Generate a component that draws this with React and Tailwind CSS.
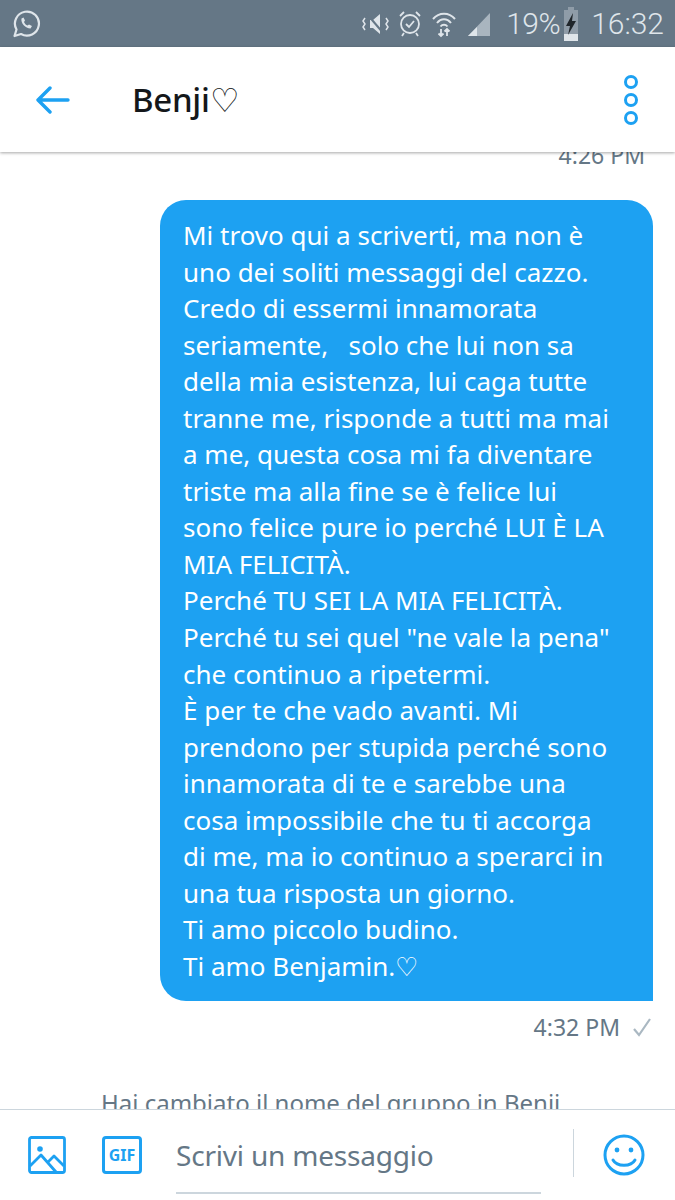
import React from 'react';

const lines = [
    'Mi trovo qui a scriverti, ma non è',
    'uno dei soliti messaggi del cazzo.',
    'Credo di essermi innamorata',
    'seriamente,   solo che lui non sa',
    'della mia esistenza, lui caga tutte',
    'tranne me, risponde a tutti ma mai',
    'a me, questa cosa mi fa diventare',
    'triste ma alla fine se è felice lui',
    'sono felice pure io perché LUI È LA',
    'MIA FELICITÀ.',
    'Perché TU SEI LA MIA FELICITÀ.',
    'Perché tu sei quel "ne vale la pena"',
    'che continuo a ripetermi.',
    'È per te che vado avanti. Mi',
    'prendono per stupida perché sono',
    'innamorata di te e sarebbe una',
    'cosa impossibile che tu ti accorga',
    'di me, ma io continuo a sperarci in',
    'una tua risposta un giorno.',
    'Ti amo piccolo budino.',
    'Ti amo Benjamin.♡',
];

const StatusBar = () => (
    <div className="h-[47px] shrink-0 bg-[#657786] flex items-center text-[#dfe5ea]">
        <svg width="30" height="30" viewBox="0 0 30 30" fill="none" stroke="currentColor" strokeWidth="2.2" className="ml-[11px]">
            <path d="M3.5 27 L5.5 20.5 A12 12 0 1 1 10 25 Z" strokeLinejoin="round" />
            <path d="M10.5 9.5 C9.5 14 14.5 19.5 19.5 19.5 L21 17 L18 15.5 L16.5 16.5 C15 16 13.5 14.5 13 13 L14 11.5 L12.5 8.5 Z" fill="currentColor" stroke="none" />
        </svg>
        <div className="ml-auto mr-[11px] flex items-center">
            <svg width="28" height="26" viewBox="0 0 28 26" fill="none" stroke="currentColor" strokeWidth="1.5">
                <path d="M8 9 H11 L18 3 V23 L11 17 H8 Z" fill="currentColor" stroke="none" />
                <path d="M5 3 L22 23" stroke="#657786" strokeWidth="2" />
                <path d="M3 7 L1 10 L3 13 L1 16 L3 19 M24 7 L26 10 L24 13 L26 16 L24 19" />
            </svg>
            <svg width="24" height="28" viewBox="0 0 24 28" fill="none" stroke="currentColor" strokeWidth="1.8" className="ml-[8px]">
                <circle cx="12" cy="14" r="9" />
                <path d="M8 14 L11 17 L16 11 M2 6 L6 2 M22 6 L18 2 M6 23 L4 26 M18 23 L20 26" />
            </svg>
            <svg width="26" height="28" viewBox="0 0 26 28" fill="none" stroke="currentColor" strokeWidth="2" className="ml-[9px]">
                <path d="M2 9 C8 2 18 2 24 9 M6 13 C10 8 16 8 20 13 M9.5 16.5 C11.5 14 14.5 14 16.5 16.5" />
                <path d="M10 19 V26 M7.5 23.5 L10 26 L12.5 23.5 M16 26 V19 M13.5 21.5 L16 19 L18.5 21.5" strokeWidth="1.8" />
            </svg>
            <svg width="26" height="28" viewBox="0 0 26 28" className="ml-[9px]">
                <path d="M24 3 V26 H2 Z" fill="#a9b5bf" />
                <path d="M2 26 L11 17 V26 Z" fill="currentColor" />
            </svg>
            <span className="ml-[14px] text-[30px] leading-none font-['Roboto',sans-serif] font-light tracking-[-0.5px]">19%</span>
            <svg width="16" height="36" viewBox="0 0 16 36" className="ml-[3px]">
                <path d="M5 1 H11 V4 H15 V35 H1 V4 H5 Z" fill="#8f9ca8" />
                <path d="M1 28 H15 V35 H1 Z" fill="#dfe5ea" />
                <path d="M10 7 L3 20 H7 L5 29 L13 15 H9 Z" fill="#20262b" />
            </svg>
            <span className="ml-[12px] text-[30px] leading-none font-['Roboto',sans-serif] font-light">16:32</span>
        </div>
    </div>
);

const Header = () => (
    <div className="relative z-10 h-[105px] shrink-0 bg-white shadow-[0_1px_3px_rgba(0,0,0,0.35)] flex items-center">
        <svg width="34" height="28" viewBox="0 0 34 28" fill="none" stroke="#1da1f2" strokeWidth="3.4" strokeLinecap="round" strokeLinejoin="round" className="ml-[36px]">
            <path d="M32 14 H3 M14 2 L2 14 L14 26" />
        </svg>
        <span className="ml-[62px] text-[33px] font-medium text-[#14171a] font-['Noto_Sans',sans-serif] tracking-[-0.3px]">Benji♡</span>
        <div className="ml-auto mr-[37px] flex flex-col gap-[4px]">
            <div className="w-[14px] h-[14px] rounded-full border-[3px] border-[#1da1f2]" />
            <div className="w-[14px] h-[14px] rounded-full border-[3px] border-[#1da1f2]" />
            <div className="w-[14px] h-[14px] rounded-full border-[3px] border-[#1da1f2]" />
        </div>
    </div>
);

const Composer = () => (
    <div className="h-[91px] shrink-0 bg-white border-t border-[#ccd6dd] flex items-center relative">
        <svg width="38" height="38" viewBox="0 0 38 38" fill="none" stroke="#1da1f2" strokeWidth="2.8" strokeLinejoin="round" className="ml-[28px]">
            <rect x="1.5" y="1.5" width="35" height="35" rx="2" />
            <circle cx="12" cy="13" r="2.8" fill="#1da1f2" stroke="none" />
            <path d="M2 30 L13 19 L28 36 M20 26 L26 20 L36 30" />
        </svg>
        <div className="ml-[36px] w-[40px] h-[38px] rounded-[4px] border-[3px] border-[#1da1f2] flex items-center justify-center text-[#1da1f2] text-[16px] font-bold font-['Noto_Sans',sans-serif]">GIF</div>
        <div className="ml-[34px] w-[365px] h-[66px] border-b-[2px] border-[#ccd6dd] mt-[12px] pt-[8px] text-[28px] text-[#657786] font-['Noto_Sans',sans-serif] tracking-[-0.2px] leading-[38px]">Scrivi un messaggio</div>
        <div className="ml-[32px] w-px h-[48px] bg-[#ccd6dd] -mt-[4px]" />
        <svg width="42" height="42" viewBox="0 0 42 42" fill="none" stroke="#1da1f2" strokeWidth="3" strokeLinecap="round" className="ml-[29px]">
            <circle cx="21" cy="21" r="19" />
            <circle cx="14" cy="16" r="2.4" fill="#1da1f2" stroke="none" />
            <circle cx="28" cy="16" r="2.4" fill="#1da1f2" stroke="none" />
            <path d="M10 26 C14 33 28 33 32 26" />
        </svg>
    </div>
);

export default function App() {
    return (
        <div className="w-[675px] h-[1200px] flex flex-col overflow-hidden bg-white font-['Noto_Sans',sans-serif]">
            <StatusBar />
            <Header />
            <div className="flex-1 min-h-0 overflow-hidden flex flex-col bg-white">
                <div className="-mt-[12px] h-[30px] pr-[30px] self-end text-[23px] text-[#657786] leading-[30px]">4:26 PM</div>
                <div className="mt-[30px] ml-[160px] mr-[22px] bg-[#1da1f2] rounded-[26px] rounded-br-none pl-[23px] pt-[17px] pb-[17px] text-white text-[26px] leading-[36.55px] whitespace-pre">
                    {lines.map((line) => (
                        <div key={line}>{line}</div>
                    ))}
                </div>
                <div className="mt-[9px] mr-[22px] flex items-center justify-end text-[23px] text-[#657786] leading-[34px]">
                    <span>4:32 PM</span>
                    <svg width="22" height="20" viewBox="0 0 22 20" fill="none" stroke="#aab8c2" strokeWidth="2.2" className="ml-[11px]">
                        <path d="M3 12 L8 18 L19 2" />
                    </svg>
                </div>
                <div className="mt-[42px] ml-[101px] text-[24px] text-[#657786] leading-[34px]">Hai cambiato il nome del gruppo in Benji</div>
            </div>
            <Composer />
        </div>
    );
}
